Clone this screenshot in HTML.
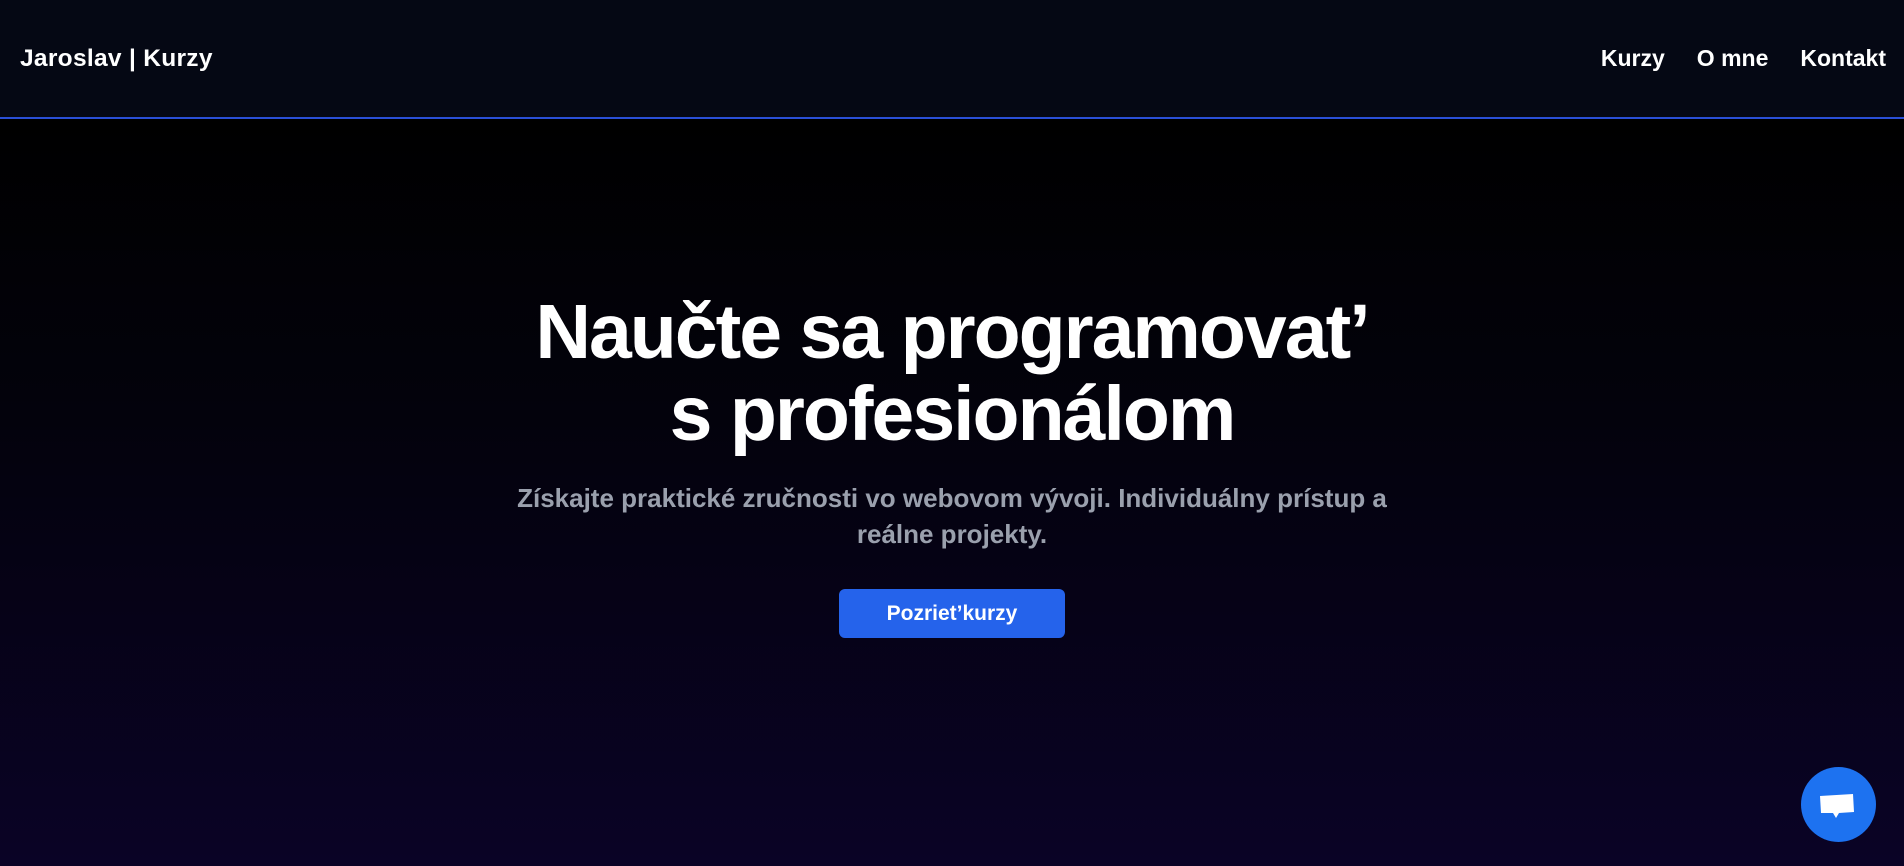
<!DOCTYPE html>
<html><head><meta charset="utf-8"><style>
*{margin:0;padding:0;box-sizing:border-box}
body{width:1904px;height:866px;overflow:hidden;font-family:"Liberation Sans",sans-serif;background:#000;color:#fff;position:relative}
header{height:119px;background:#050814;border-bottom:2px solid #2a4fd6;display:flex;align-items:center;justify-content:space-between;padding:0 18px 0 20px}
.logo{font-size:24.5px;font-weight:700;letter-spacing:0.3px}
nav a{color:#fff;text-decoration:none;font-size:23px;font-weight:700;margin-left:32px}
.hero{position:absolute;top:119px;left:0;width:1904px;height:747px;background:linear-gradient(180deg,#000 0%,#03020c 40%,#0a0326 100%);text-align:center}
h1{font-size:77px;font-weight:700;line-height:82px;letter-spacing:-2px;margin-top:172px}
p{font-size:26px;font-weight:700;color:#9aa0ad;line-height:36px;width:900px;margin:25px auto 0}
.btn{display:inline-block;margin-top:37px;width:226px;height:49px;line-height:49px;background:#2563eb;border-radius:6px;font-size:21px;font-weight:700;color:#fff}
.chat{position:absolute;left:1801px;top:767px;width:75px;height:75px;border-radius:50%;background:#1d72f0}
</style></head><body>
<header><div class="logo">Jaroslav | Kurzy</div><nav><a>Kurzy</a><a>O mne</a><a>Kontakt</a></nav></header>
<div class="hero">
<h1>Naučte sa programovat’<br>s profesionálom</h1>
<p>Získajte praktické zručnosti vo webovom vývoji. Individuálny prístup a reálne projekty.</p>
<div class="btn">Pozriet’kurzy</div>
</div>
<div class="chat"><svg width="75" height="75" viewBox="0 0 75 75"><path d="M19 29 L52 27 L53 45 L38 46 L35 51 L32 46 L20 46 Z" fill="#fff"/></svg></div>
</body></html>
